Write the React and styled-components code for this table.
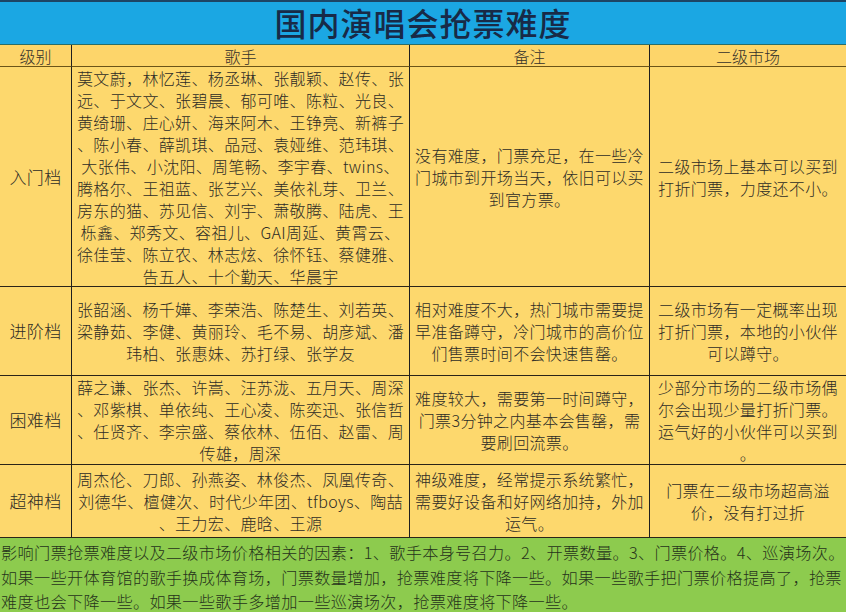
import React from 'react'
import styled, { createGlobalStyle } from 'styled-components'

const GlobalStyle = createGlobalStyle`
  html, body {
    margin: 0;
    padding: 0;
    background: #fdd86d;
  }
  body {
    font-family: "Noto Sans CJK SC", "Noto Sans", sans-serif;
  }
`

const rows = [
  {
    level: '入门档',
    height: 220,
    singers: [
      '莫文蔚，林忆莲、杨丞琳、张靓颖、赵传、张',
      '远、于文文、张碧晨、郁可唯、陈粒、光良、',
      '黄绮珊、庄心妍、海来阿木、王铮亮、新裤子',
      '、陈小春、薛凯琪、品冠、袁娅维、范玮琪、',
      '大张伟、小沈阳、周笔畅、李宇春、twins、',
      '腾格尔、王祖蓝、张艺兴、美依礼芽、卫兰、',
      '房东的猫、苏见信、刘宇、萧敬腾、陆虎、王',
      '栎鑫、郑秀文、容祖儿、GAI周延、黄霄云、',
      '徐佳莹、陈立农、林志炫、徐怀钰、蔡健雅、',
      '告五人、十个勤天、华晨宇'
    ],
    notes: ['没有难度，门票充足，在一些冷', '门城市到开场当天，依旧可以买', '到官方票。'],
    market: ['二级市场上基本可以买到', '打折门票，力度还不小。']
  },
  {
    level: '进阶档',
    height: 89,
    singers: [
      '张韶涵、杨千嬅、李荣浩、陈楚生、刘若英、',
      '梁静茹、李健、黄丽玲、毛不易、胡彦斌、潘',
      '玮柏、张惠妹、苏打绿、张学友'
    ],
    notes: ['相对难度不大，热门城市需要提', '早准备蹲守，冷门城市的高价位', '们售票时间不会快速售罄。'],
    market: ['二级市场有一定概率出现', '打折门票，本地的小伙伴', '可以蹲守。']
  },
  {
    level: '困难档',
    height: 89,
    singers: [
      '薛之谦、张杰、许嵩、汪苏泷、五月天、周深',
      '、邓紫棋、单依纯、王心凌、陈奕迅、张信哲',
      '、任贤齐、李宗盛、蔡依林、伍佰、赵雷、周',
      '传雄，周深'
    ],
    notes: ['难度较大，需要第一时间蹲守，', '门票3分钟之内基本会售罄，需', '要刷回流票。'],
    market: ['少部分市场的二级市场偶', '尔会出现少量打折门票。', '运气好的小伙伴可以买到', '。']
  },
  {
    level: '超神档',
    height: 73,
    singers: [
      '周杰伦、刀郎、孙燕姿、林俊杰、凤凰传奇、',
      '刘德华、檀健次、时代少年团、tfboys、陶喆',
      '、王力宏、鹿晗、王源'
    ],
    notes: ['神级难度，经常提示系统繁忙，', '需要好设备和好网络加持，外加', '运气。'],
    market: ['门票在二级市场超高溢', '价，没有打过折']
  }
]

const footerLines = [
  '影响门票抢票难度以及二级市场价格相关的因素：1、歌手本身号召力。2、开票数量。3、门票价格。4、巡演场次。',
  '如果一些开体育馆的歌手换成体育场，门票数量增加，抢票难度将下降一些。如果一些歌手把门票价格提高了，抢票',
  '难度也会下降一些。如果一些歌手多增加一些巡演场次，抢票难度将下降一些。'
]

function Lines({ lines }) {
  return lines.map((line, i) => <Line key={i}>{line}</Line>)
}

export default function App() {
  return (
    <Page>
      <GlobalStyle />
      <TitleBar>国内演唱会抢票难度</TitleBar>
      <Table $rows={rows.map(r => r.height)}>
        <HeadCell>级别</HeadCell>
        <HeadCell>歌手</HeadCell>
        <HeadCell>备注</HeadCell>
        <HeadCell $last>二级市场</HeadCell>
        {rows.map(row => (
          <React.Fragment key={row.level}>
            <Cell $label><Line>{row.level}</Line></Cell>
            <Cell><Lines lines={row.singers} /></Cell>
            <Cell><Lines lines={row.notes} /></Cell>
            <Cell $last><Lines lines={row.market} /></Cell>
          </React.Fragment>
        ))}
      </Table>
      <Footer>
        {footerLines.map((line, i) => <FooterLine key={i}>{line}</FooterLine>)}
      </Footer>
    </Page>
  )
}

const Page = styled.div`
  width: 846px;
  height: 612px;
  overflow: hidden;
  display: flex;
  flex-direction: column;
  background: #fdd86d;
`

const TitleBar = styled.div`
  height: 42px;
  flex: none;
  border-top: 2px solid #1d4565;
  border-bottom: 1px solid #2a6e68;
  background: #1ba7e3;
  color: #182a47;
  font-size: 32px;
  font-weight: 500;
  letter-spacing: 1px;
  line-height: 40px;
  text-align: center;
  overflow: hidden;
`

const Table = styled.div`
  flex: none;
  display: grid;
  grid-template-columns: 72px 338px 240px 196px;
  grid-template-rows: 22px ${p => p.$rows.map(h => h + 'px').join(' ')};
  background: #fdd86d;
`

const HeadCell = styled.div`
  display: flex;
  align-items: center;
  justify-content: center;
  background: #fdd56a;
  border-right: ${p => (p.$last ? 'none' : '1px solid #1f1f1f')};
  border-bottom: 1.5px solid #6b5418;
  color: #34312a;
  font-size: 16px;
  font-weight: 300;
  line-height: 18px;
  overflow: hidden;
`

const Cell = styled.div`
  display: flex;
  flex-direction: column;
  align-items: center;
  justify-content: center;
  border-right: ${p => (p.$last ? 'none' : '1px solid #1f1f1f')};
  border-bottom: 1.5px solid #2a2418;
  color: #2e2c26;
  font-size: ${p => (p.$label ? '17px' : '16px')};
  font-weight: 300;
  line-height: 22px;
  letter-spacing: 0.35px;
  overflow: hidden;
`

const Line = styled.div`
  white-space: nowrap;
  text-align: center;
`

const Footer = styled.div`
  flex: 1;
  background: #8dcb4e;
  padding: 2px 0 0 1px;
  color: #26331b;
  font-size: 16.2px;
  font-weight: 300;
  line-height: 24.5px;
  letter-spacing: 0.3px;
  overflow: hidden;
`

const FooterLine = styled.div`
  white-space: nowrap;
`
